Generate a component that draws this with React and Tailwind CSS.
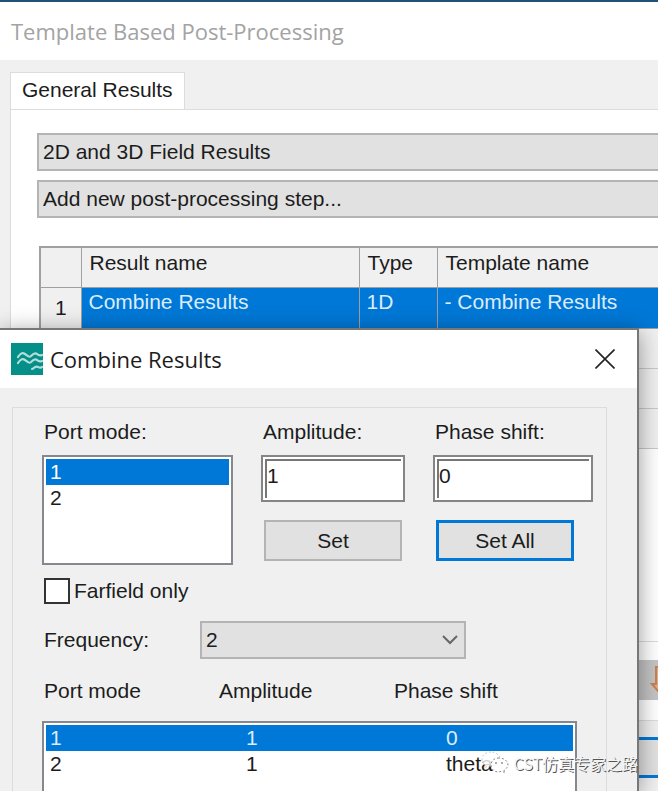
import React, { useState } from 'react';

const resultRows = [{ id: 1, name: 'Combine Results', type: '1D', template: '- Combine Results' }];
const emptyRows = [2, 3, 4];
const excitations = [
  { port: '1', amplitude: '1', phase: '0' },
  { port: '2', amplitude: '1', phase: 'theta' },
];

const WaveLogo = () => (
  <svg className="w-8 h-8 shrink-0" viewBox="0 0 32 32" fill="none" strokeLinecap="round" strokeLinejoin="round">
    <rect width="32" height="32" fill="#048f88" />
    <g stroke="#b4dedb" strokeWidth="2.2">
      <path d="M7 14c2-3 4-5 7-3s4 4 6 2 4-4 6-2 3 2 5 1" />
      <path d="M7 20c2-3 4-5 7-3s4 4 6 2 4-4 6-2 3 2 5 1" />
      <path d="M21 26c2 0 3-4 6-2 2 1 3 1 4 0" />
    </g>
  </svg>
);

const CloseIcon = () => (
  <svg className="w-5 h-5" viewBox="0 0 20 20" fill="none" stroke="#222" strokeWidth="1.6">
    <path d="M0.5 0.5l19 19M19.5 0.5l-19 19" />
  </svg>
);

const ChevronIcon = () => (
  <svg className="w-4 h-4" viewBox="0 0 16 16" fill="none" stroke="#666" strokeWidth="2">
    <path d="M1 4l7 7 7-7" />
  </svg>
);

const ArrowDownIcon = () => (
  <svg className="w-4 h-7" viewBox="0 0 16 28" fill="none" stroke="#c98252" strokeWidth="2">
    <path d="M6 1v17H2l6 7 6-7h-4V1z" fill="#e2b08c" />
  </svg>
);

const ChatIcon = () => (
  <svg className="w-7 h-6 shrink-0" viewBox="0 0 28 24" fill="#fff" fillOpacity="0.8" stroke="#888" strokeWidth="1" strokeDasharray="2 2">
    <path stroke="#ccc" d="M10 1C5 1 1 4 1 8c0 3 1 4 3 6l-1 3 4-2h3c5 0 9-3 9-7S15 1 10 1z" />
    <path d="M18 7c-5 0-8 3-8 7s3 7 8 7l3-1 3 2-1-3c2-1 4-3 4-5 0-4-4-7-9-7z" />
    <g fill="#777" stroke="none">
      <circle cx="15" cy="12" r="1" />
      <circle cx="21" cy="12" r="1" />
    </g>
  </svg>
);

function ResultTable() {
  return (
    <table className="w-full table-fixed border-collapse border-t-2 border-l-2 border-[#a0a0a0] text-left">
      <colgroup>
        <col className="w-[41px]" />
        <col className="w-[278px]" />
        <col className="w-[78px]" />
        <col />
      </colgroup>
      <thead>
        <tr className="h-10 bg-[#f0f0f0] align-top">
          <td className="border border-[#a0a0a0]" />
          <th className="border border-[#a0a0a0] px-2 pt-px font-normal">Result name</th>
          <th className="border border-[#a0a0a0] px-2 pt-px font-normal">Type</th>
          <th className="border border-r-0 border-[#a0a0a0] px-2 pt-px font-normal">Template name</th>
        </tr>
      </thead>
      <tbody>
        {resultRows.map(r => (
          <tr key={r.id} className="h-[41px] bg-[#0078d7] align-top text-[#dcecfa]">
            <th className="border border-[#a0a0a0] bg-[#f0f0f0] pt-[6px] text-center font-normal text-[#1c1c1c]">{r.id}</th>
            <td className="border border-[#a0a0a0] px-[7px]">{r.name}</td>
            <td className="border border-[#a0a0a0] px-[7px]">{r.type}</td>
            <td className="border border-r-0 border-[#a0a0a0] px-[7px]">{r.template}</td>
          </tr>
        ))}
        {emptyRows.map(id => (
          <tr key={id} className="h-10 bg-[#f0f0f0]">
            <td className="border border-r-0 border-[#c8c8c8]" colSpan={4} />
          </tr>
        ))}
      </tbody>
    </table>
  );
}

function ValueField({ id, label, value, onChange }) {
  return (
    <>
      <label htmlFor={id} className="block h-[35px] pl-[2px] leading-6">{label}</label>
      <div className="h-[47px] border-2 border-[#858585] bg-white p-[2px]">
        <input
          id={id}
          value={value}
          onChange={e => onChange(e.target.value)}
          className="block h-full w-full border-t-2 border-l-2 border-[#777] pb-2 focus:outline-none"
        />
      </div>
    </>
  );
}

function CombineDialog() {
  const [selectedPort, setSelectedPort] = useState('1');
  const [selectedRow, setSelectedRow] = useState('1');
  const [amplitude, setAmplitude] = useState('1');
  const [phase, setPhase] = useState('0');
  const [frequency, setFrequency] = useState('2');
  const [farfield, setFarfield] = useState(false);

  return (
    <section
      role="dialog"
      aria-label="Combine Results"
      className="absolute top-[326px] bottom-0 left-0 right-[19px] flex flex-col border-t-2 border-r-2 border-[#777] bg-[#f0f0f0] shadow-[0_4px_22px_rgba(0,0,0,0.4)]"
    >
      <header className="flex h-[58px] shrink-0 items-center bg-white pl-[11px] pr-[22px]">
        <WaveLogo />
        <h2 className="ml-[7px] flex-1 font-['Open_Sans',sans-serif] text-[22px]">Combine Results</h2>
        <button type="button" aria-label="Close"><CloseIcon /></button>
      </header>

      <div className="ml-3 mr-[30px] mt-[19px] flex-1 border border-b-0 border-[#dcdcdc] pl-[29px] pt-3">
        <div className="flex items-start">
          <div className="w-[191px]">
            <p className="h-[35px] pl-[2px] leading-6">Port mode:</p>
            <ul role="listbox" aria-label="Port mode" className="h-[110px] border-2 border-[#85898f] bg-white p-[2px] leading-[26px]">
              {['1', '2'].map(port => (
                <li
                  key={port}
                  role="option"
                  aria-selected={port === selectedPort}
                  onClick={() => setSelectedPort(port)}
                  className={port === selectedPort ? 'bg-[#0078d7] px-1 text-white' : 'px-1'}
                >{port}</li>
              ))}
            </ul>
          </div>
          <div className="ml-7 w-[144px]">
            <ValueField id="amplitude" label="Amplitude:" value={amplitude} onChange={setAmplitude} />
            <button type="button" className="ml-[3px] mt-[18px] block h-[41px] w-[138px] border-2 border-[#b4b4b4] bg-[#e1e1e1]">Set</button>
          </div>
          <div className="ml-7 w-[160px]">
            <ValueField id="phase" label="Phase shift:" value={phase} onChange={setPhase} />
            <button type="button" className="ml-[3px] mt-[18px] block h-[41px] w-[138px] border-3 border-[#0078d7] bg-[#e1e1e1]">Set All</button>
          </div>
        </div>

        <label className="mt-3 flex items-center gap-1 pl-[2px]">
          <input
            type="checkbox"
            checked={farfield}
            onChange={e => setFarfield(e.target.checked)}
            className="h-[26px] w-[26px] appearance-none border-2 border-[#333] bg-white checked:bg-[#0078d7]"
          />
          Farfield only
        </label>

        <div className="mt-4 flex items-center">
          <label htmlFor="frequency" className="w-[158px] pl-[2px]">Frequency:</label>
          <div className="grid w-[266px] items-center">
            <select
              id="frequency"
              value={frequency}
              onChange={e => setFrequency(e.target.value)}
              className="col-start-1 row-start-1 h-[38px] appearance-none border-2 border-[#b4b4b4] bg-[#e1e1e1] pl-1"
            >
              <option>2</option>
            </select>
            <span className="pointer-events-none col-start-1 row-start-1 mr-2 justify-self-end"><ChevronIcon /></span>
          </div>
        </div>

        <div className="mt-[18px] flex pl-[2px]">
          <span id="col-port" className="w-[175px]">Port mode</span>
          <span id="col-amplitude" className="w-[175px]">Amplitude</span>
          <span id="col-phase">Phase shift</span>
        </div>
        <div className="mt-4 h-40 w-[535px] border-2 border-[#85898f] bg-white p-[2px]">
          <table className="w-full table-fixed text-left leading-[26px]">
            <tbody>
              {excitations.map(row => (
                <tr
                  key={row.port}
                  onClick={() => setSelectedRow(row.port)}
                  className={row.port === selectedRow ? 'bg-[#0078d7] text-[#dcecfa]' : ''}
                >
                  <td headers="col-port" className="w-[196px] pl-1">{row.port}</td>
                  <td headers="col-amplitude" className="w-[200px] pl-1">{row.amplitude}</td>
                  <td headers="col-phase" className="pl-1">{row.phase}</td>
                </tr>
              ))}
            </tbody>
          </table>
        </div>
      </div>
    </section>
  );
}

export default function App() {
  return (
    <div className="relative flex h-screen flex-col overflow-hidden border-t-2 border-[#1f5276] bg-[#f0f0f0] font-['Liberation_Sans',Arial,sans-serif] text-[21px] leading-7 text-[#1c1c1c]">
      <header className="flex h-[58px] shrink-0 items-center bg-white pl-[11px]">
        <h1 className="font-['Open_Sans',sans-serif] text-[22px] text-[#a3a3a3]">Template Based Post-Processing</h1>
      </header>

      <main className="flex flex-1 flex-col pl-[10px] pt-3">
        <nav className="flex">
          <button type="button" className="-mb-px h-[38px] border border-b-0 border-[#dcdcdc] bg-white px-[11px] pb-1">General Results</button>
        </nav>
        <div className="border-y border-l border-[#dcdcdc] bg-white pl-[26px] pt-[23px] pb-5">
          <select aria-label="Result category" className="block h-[38px] w-full appearance-none border-2 border-r-0 border-[#b4b4b4] bg-[#e1e1e1] pl-1">
            <option>2D and 3D Field Results</option>
          </select>
          <select aria-label="New step" className="mt-[9px] block h-[38px] w-full appearance-none border-2 border-r-0 border-[#b4b4b4] bg-[#e1e1e1] pl-1">
            <option>Add new post-processing step...</option>
          </select>
          <div className="mt-7 h-[396px] border-b border-[#dcdcdc] pl-[2px]">
            <ResultTable />
          </div>
          <div className="mt-[18px] flex justify-end">
            <button type="button" aria-label="Move down" className="-mr-4 flex h-10 w-14 items-center justify-end bg-[#c4c4c4] pr-2">
              <ArrowDownIcon />
            </button>
          </div>
        </div>
        <div className="mt-4 flex justify-end">
          <button type="button" aria-label="Evaluate" className="h-[41px] w-32 border-3 border-r-0 border-[#0078d7] bg-[#e1e1e1]" />
        </div>
      </main>

      <CombineDialog />

      <div className="absolute right-5 bottom-[14px] flex items-center gap-1 font-['Noto_Sans_CJK_SC',sans-serif] text-[16px] text-[#f4f4f4] [text-shadow:1px_1px_0_#555]">
        <ChatIcon />
        CST仿真专家之路
      </div>
    </div>
  );
}
